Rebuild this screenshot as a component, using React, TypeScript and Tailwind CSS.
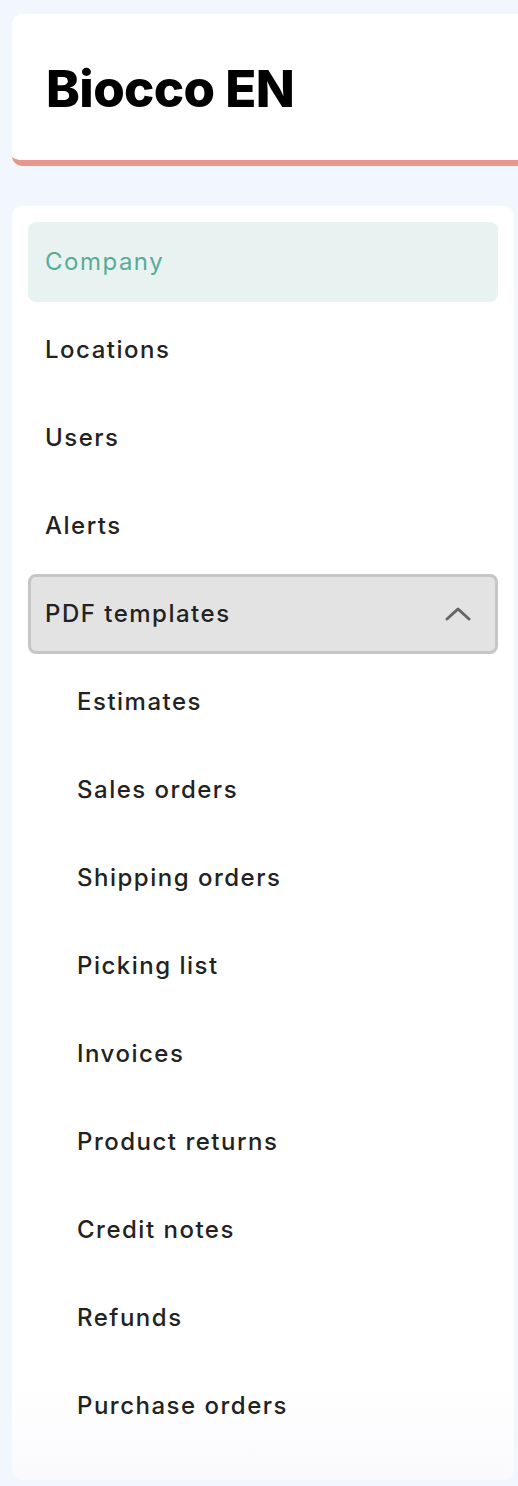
import React from "react";

const subs = [
  "Estimates",
  "Sales orders",
  "Shipping orders",
  "Picking list",
  "Invoices",
  "Product returns",
  "Credit notes",
  "Refunds",
  "Purchase orders",
];

export default function App() {
  return (
    <div className="min-h-[1486px] w-[518px] overflow-hidden bg-[#f2f6fd] pt-[14px]" style={{ fontFamily: "Inter, 'Noto Sans', sans-serif" }}>
      <div className="ml-[12px] w-[530px] h-[152px] bg-white rounded-tl-[10px] rounded-bl-[10px] border-b-[6px] border-[#e8958d] flex items-center pl-[34px]">
        <h1 className="text-[51px] font-extrabold text-black tracking-[-0.6px] leading-none pt-[2px]">Biocco EN</h1>
      </div>
      <div className="mt-[40px] ml-[12px] w-[502px] bg-gradient-to-b from-white from-[92%] to-[#fafafd] rounded-[10px] px-[16px] pt-[16px] pb-[34px] flex flex-col gap-[8px] tracking-[1.5px]">
        <div className="h-[80px] rounded-[8px] bg-[#e8f3f1] flex items-center pl-[17px] text-[24px] text-[#5aab96]">Company</div>
        <div className="h-[80px] flex items-center pl-[17px] text-[24px] font-medium text-[#222]">Locations</div>
        <div className="h-[80px] flex items-center pl-[17px] text-[24px] font-medium text-[#222]">Users</div>
        <div className="h-[80px] flex items-center pl-[17px] text-[24px] font-medium text-[#222]">Alerts</div>
        <div className="h-[80px] rounded-[8px] bg-[#e3e3e3] border-[3px] border-[#c6c6c6] flex items-center justify-between pl-[14px] pr-[24px] text-[24px] font-medium text-[#222]">
          <span>PDF templates</span>
          <svg width="26" height="16" viewBox="0 0 26 16" fill="none" stroke="#666" strokeWidth="3" strokeLinecap="round" strokeLinejoin="round">
            <path d="M2 13 L13 3 L24 13" />
          </svg>
        </div>
        {subs.map((s) => (
          <div key={s} className="h-[80px] flex items-center pl-[49px] text-[24px] font-medium text-[#222]">{s}</div>
        ))}
      </div>
    </div>
  );
}
